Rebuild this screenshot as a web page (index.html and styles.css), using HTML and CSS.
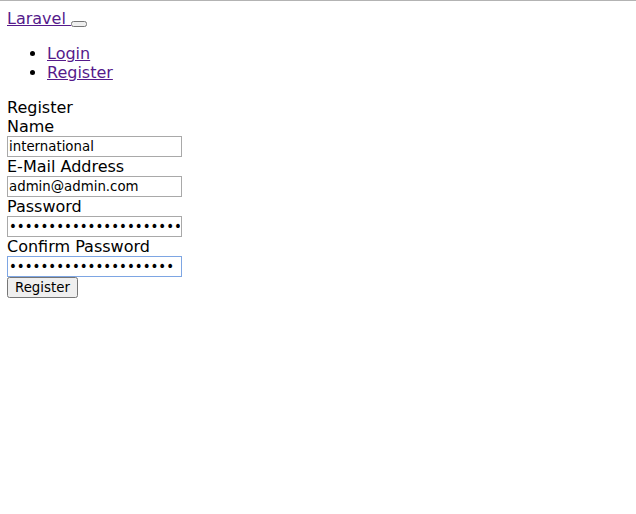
FILE: index.html
```html
<!DOCTYPE html>
<html>
<head>
<meta charset="utf-8">
<title>Laravel</title>
<link rel="stylesheet" href="styles.css">
</head>
<body>
<nav class="navbar">
<a class="brand" href="#">Laravel </a><button class="toggler" type="button"></button>
<ul class="nav-links">
<li><a href="#">Login</a></li>
<li><a href="#">Register</a></li>
</ul>
</nav>
<div class="card">
<div class="card-header">Register</div>
<form class="form">
<div class="group"><label for="name">Name</label><div><input id="name" class="field" type="text" value="international"></div></div>
<div class="group"><label for="email">E-Mail Address</label><div><input id="email" class="field" type="email" value="admin@admin.com"></div></div>
<div class="group"><label for="password">Password</label><div><input id="password" class="field" type="password" value="passwordpasswordpassword"></div></div>
<div class="group"><label for="password-confirm">Confirm Password</label><div><input id="password-confirm" class="field is-focused" type="password" value="passwordpasswordpass1" autofocus></div></div>
<div class="group"><button class="submit" type="submit">Register</button></div>
</form>
</div>
</body>
</html>
```
FILE: styles.css
```css
html {
  border-top: 1px solid #b3b3b3;
}
body {
  margin: 8px 8px 8px 7px;
  font-family: "DejaVu Sans", sans-serif;
  font-size: 16px;
  color: #000;
}
.brand, .nav-links a {
  color: #551a8b;
}
.toggler {
  font-family: "DejaVu Sans", sans-serif;
}
.nav-links {
  margin: 16px 0;
  padding-left: 40px;
}
.field {
  box-sizing: border-box;
  width: 175px;
  height: 21px;
  margin: 0;
  padding: 1px;
  border: 1px solid #a9a9a9;
  border-radius: 0;
  background: #fff;
  font-family: "DejaVu Sans", sans-serif;
  font-size: 13.333px;
  color: #000;
}
.field:focus, .field.is-focused {
  outline: none;
  border-color: #7ea6e3;
}
.submit {
  font-family: "DejaVu Sans", sans-serif;
  font-size: 13.333px;
}
```
